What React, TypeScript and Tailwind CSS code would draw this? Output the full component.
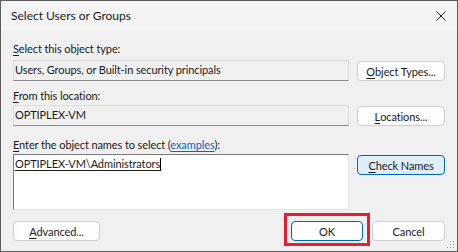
import React from "react";

const Key = ({ c }: { c: string }) => <span className="underline underline-offset-[2px]">{c}</span>;

function Btn({
  children,
  w,
  variant = "normal",
}: {
  children: React.ReactNode;
  w: string;
  variant?: "normal" | "default" | "focus";
}) {
  const styles =
    variant === "focus"
      ? "bg-[#e0eef9] border-[#0067c0]"
      : variant === "default"
      ? "bg-[#fdfdfd] border-[#0067c0]"
      : "bg-[#fdfdfd] border-[#d0d0d0]";
  return (
    <button
      type="button"
      className={`${w} h-[20px] shrink-0 rounded-[4px] border text-[11px] leading-none text-[#1b1b1b] flex items-center justify-center ${styles}`}
    >
      {children}
    </button>
  );
}

function ReadField({ value }: { value: string }) {
  return (
    <div className="w-[336px] h-[21px] shrink-0 bg-[#f0f0f0] border border-[#dcdcdc] border-b-[#8b8b8b] pl-[1px] flex items-center text-[#1b1b1b]">
      {value}
    </div>
  );
}

export default function App() {
  return (
    <div
      className="relative w-[458px] h-[252px] border border-[#5b5b5b] bg-[#f0f0f0] flex flex-col text-[11px] text-[#1b1b1b] tracking-[-0.1px]"
      style={{ fontFamily: "Lato, 'Liberation Sans', sans-serif" }}
    >
      <div className="h-[30px] bg-[#f3f3f3] flex items-center justify-between pl-[10px] pr-[10px]">
        <span className="text-[12px] tracking-normal">Select Users or Groups</span>
        <svg width="10" height="10" viewBox="0 0 10 10" className="mr-[1px]">
          <path d="M0.5 0.5 L9.5 9.5 M9.5 0.5 L0.5 9.5" stroke="#1b1b1b" strokeWidth="1" />
        </svg>
      </div>

      <div className="flex flex-col px-[12px]">
        <div className="mt-[10px] leading-[16px]">
          <Key c="S" />elect this object type:
        </div>
        <div className="mt-[3px] flex items-start gap-[8px]">
          <ReadField value="Users, Groups, or Built-in security principals" />
          <div className="mt-[1px]">
            <Btn w="w-[88px]">
              <Key c="O" />bject Types...
            </Btn>
          </div>
        </div>

        <div className="mt-[7px] leading-[16px]">
          <Key c="F" />rom this location:
        </div>
        <div className="mt-[1px] flex items-start gap-[8px]">
          <ReadField value="OPTIPLEX-VM" />
          <div className="mt-[1px]">
            <Btn w="w-[88px]">
              <Key c="L" />ocations...
            </Btn>
          </div>
        </div>

        <div className="mt-[11px] leading-[16px]">
          <Key c="E" />nter the object names to select (
          <span className="text-[#0066cc] underline underline-offset-[2px]">examples</span>):
        </div>
        <div className="mt-[1px] flex items-start gap-[8px]">
          <div className="w-[336px] h-[56px] shrink-0 bg-white border border-[#e3e3e3] border-t-[#7a7a7a] border-l-[#7a7a7a] pl-[1px] pt-[2px] leading-[13px]">
            <span className="underline underline-offset-[2px]">OPTIPLEX-VM\Administrators</span>
            <span className="inline-block w-[1px] h-[13px] bg-black align-[-3px]" />
          </div>
          <div className="mt-[1px]">
            <Btn w="w-[88px]" variant="focus">
              <Key c="C" />heck Names
            </Btn>
          </div>
        </div>

        <div className="mt-[11px] flex items-start">
          <Btn w="w-[87px]">
            <Key c="A" />dvanced...
          </Btn>
          <div className="flex-1" />
          <div className="relative">
            <Btn w="w-[72px]" variant="default">
              OK
            </Btn>
            <div className="absolute left-[-7px] top-[-8px] w-[86px] h-[33px] border-[3px] border-[#e5202e]" />
          </div>
          <div className="w-[9px]" />
          <Btn w="w-[73px]">Cancel</Btn>
        </div>
      </div>

      <svg className="absolute right-[2px] bottom-[2px]" width="9" height="9" viewBox="0 0 9 9">
        <rect x="7" y="1" width="1" height="1" fill="#9a9a9a" />
        <rect x="4" y="4" width="1" height="1" fill="#9a9a9a" />
        <rect x="7" y="4" width="1" height="1" fill="#9a9a9a" />
        <rect x="1" y="7" width="1" height="1" fill="#9a9a9a" />
        <rect x="4" y="7" width="1" height="1" fill="#9a9a9a" />
        <rect x="7" y="7" width="1" height="1" fill="#9a9a9a" />
      </svg>
    </div>
  );
}
